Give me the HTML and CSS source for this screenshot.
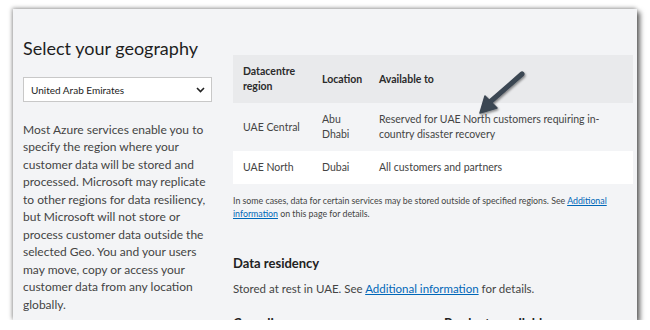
FILE: index.html
```html
<!DOCTYPE html>
<html lang="en">
<head>
    <meta charset="UTF-8">
    <meta name="viewport" content="width=device-width, initial-scale=1.0">
    <title>Select your geography</title>
    <link rel="stylesheet" href="styles.css">
</head>
<body>

<div class="frame">
    <div class="side">
        <h2>Select your geography</h2>
        <div class="geo-select">
            <span>United Arab Emirates</span>
            <svg width="9" height="6" viewBox="0 0 9 6"><path d="M1 1l3.5 3.5L8 1" fill="none" stroke="#222" stroke-width="1.6"/></svg>
        </div>
        <p class="intro">Most Azure services enable you to specify the region where your customer data will be stored and processed. Microsoft may replicate to other regions for data resiliency, but Microsoft will not store or process customer data outside the selected Geo. You and your users may move, copy or access your customer data from any location globally.</p>
    </div>

    <div class="main">
        <table class="regions">
            <colgroup>
                <col class="col-region">
                <col class="col-location">
                <col>
            </colgroup>
            <thead>
                <tr>
                    <th>Datacentre region</th>
                    <th>Location</th>
                    <th>Available to</th>
                </tr>
            </thead>
            <tbody>
                <tr>
                    <td>UAE Central</td>
                    <td>Abu Dhabi</td>
                    <td>Reserved for UAE North customers requiring in-country disaster recovery</td>
                </tr>
                <tr class="alt">
                    <td>UAE North</td>
                    <td>Dubai</td>
                    <td>All customers and partners</td>
                </tr>
            </tbody>
        </table>
        <p class="note">In some cases, data for certain services may be stored outside of specified regions. See <a href="#">Additional information</a> on this page for details.</p>

        <h3>Data residency</h3>
        <p class="body-text">Stored at rest in UAE. See <a href="#">Additional information</a> for details.</p>

        <div class="more">
            <h3>Compliance</h3>
            <h3>Products available</h3>
        </div>
    </div>

    <svg class="pointer" width="60" height="52" viewBox="0 0 60 52">
        <defs>
            <filter id="shade" x="-30%" y="-30%" width="160%" height="160%">
                <feDropShadow dx="1" dy="1.5" stdDeviation="1.2" flood-color="#000" flood-opacity="0.45"/>
            </filter>
        </defs>
        <g filter="url(#shade)" fill="#3b4652" stroke="#3b4652">
            <line x1="52" y1="6" x2="20" y2="34" stroke-width="5" stroke-linecap="round"/>
            <path d="M10 45 L15 28 L27 40 Z" stroke-width="1.5" stroke-linejoin="round"/>
        </g>
    </svg>
</div>

</body>
</html>
```

FILE: styles.css
```css
body {
    margin: 0;
    background: #fff;
    font-family: Lato, "Open Sans", sans-serif;
    color: #3a3a3a;
}
.frame {
    position: relative;
    display: flex;
    gap: 21px;
    margin: 9px 0 0 13px;
    width: 614px;
    height: 311px;
    padding-left: 10px;
    background: #f3f4f6;
    box-shadow: 3px 3px 5px rgba(0, 0, 0, 0.6), -1px -1px 4px rgba(0, 0, 0, 0.35);
    overflow: hidden;
}
.side {
    width: 189px;
    flex-shrink: 0;
    padding-top: 26px;
}
.side h2 {
    margin: 0;
    font-size: 18px;
    font-weight: 400;
    line-height: 26px;
    color: #1e1e1e;
}
.geo-select {
    display: flex;
    justify-content: space-between;
    align-items: center;
    height: 25px;
    margin-top: 16px;
    padding: 0 6px 0 7px;
    background: #fff;
    border: 1px solid #c8c8c8;
    box-sizing: border-box;
    font-size: 10px;
    color: #222;
}
.intro {
    margin: 18.5px 0 0;
    font-size: 12px;
    line-height: 17.5px;
    color: #444;
}
.main {
    width: 400px;
    flex-shrink: 0;
    padding-top: 46px;
}
.regions {
    width: 100%;
    table-layout: fixed;
    border-collapse: collapse;
    font-size: 10.5px;
    line-height: 15px;
}
.col-region {
    width: 79px;
}
.col-location {
    width: 57px;
}
.regions th,
.regions td {
    padding: 9px 10px;
    text-align: left;
    vertical-align: middle;
}
.regions th {
    background: #e9eaec;
    font-weight: 700;
    color: #2b2b2b;
}
.regions td {
    color: #444;
}
.regions .alt td {
    background: #fff;
}
.note {
    margin: 10px 0 0;
    font-size: 8.8px;
    line-height: 13px;
    color: #444;
}
a {
    color: #0067b8;
}
.main h3 {
    margin: 33px 0 0;
    font-size: 13px;
    font-weight: 700;
    line-height: 20px;
    color: #222;
}
.body-text {
    margin: 7px 0 0;
    font-size: 11.5px;
    line-height: 18px;
    color: #444;
}
.more {
    display: grid;
    grid-template-columns: 211px auto;
}
.more h3 {
    margin-top: 15px;
}
.pointer {
    position: absolute;
    left: 457px;
    top: 59px;
}
```
